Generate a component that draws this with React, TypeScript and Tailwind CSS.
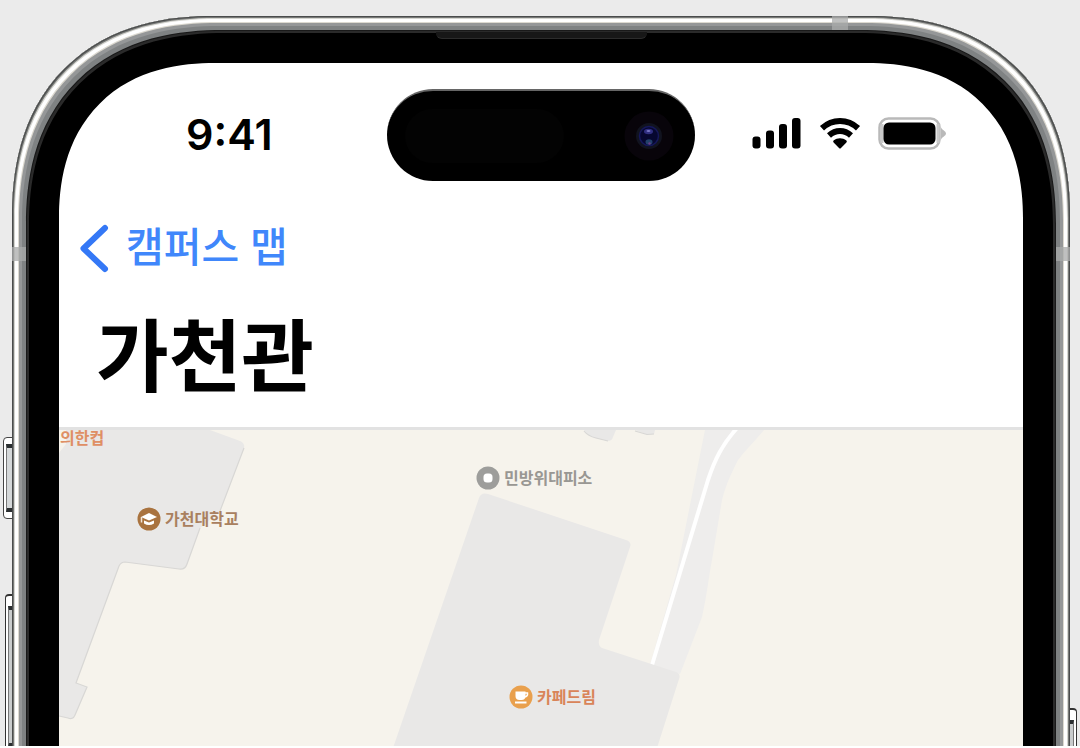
import React from "react";

function SignalIcon() {
  return (
    <svg className="h-9 w-[50px]" viewBox="0 0 50 36" aria-label="신호" role="img">
      <rect x="0.5" y="19.5" width="8" height="12" rx="3" />
      <rect x="14" y="13.5" width="8" height="18" rx="3" />
      <rect x="27" y="7" width="8" height="24.5" rx="3" />
      <rect x="40" y="1" width="8.5" height="30.5" rx="3" />
    </svg>
  );
}

function WifiIcon() {
  return (
    <svg className="h-9 w-[42px]" viewBox="0 0 42 36" aria-label="와이파이" role="img">
      <path d="M3 11.2C13.4 1.6 28.6 1.6 39 11.2" fill="none" stroke="#000" strokeWidth="6" />
      <path d="M10 18.4C16.5 12.6 25.5 12.6 32 18.4" fill="none" stroke="#000" strokeWidth="6" />
      <path d="M14.6 23.6C18.4 20.6 23.6 20.6 27.4 23.6C28 24.2 28 24.8 27.4 25.4L22 30.9C21.3 31.6 20.7 31.6 20 30.9L14.6 25.4C14 24.8 14 24.2 14.6 23.6Z" />
    </svg>
  );
}

function BatteryIcon() {
  return (
    <svg className="h-9 w-[70px]" viewBox="0 0 70 36" aria-label="배터리" role="img">
      <rect x="1.5" y="1.5" width="60" height="30" rx="9" fill="#fff" stroke="#b9b9b9" strokeWidth="2.5" />
      <path d="M4 7V26M60 7V26" stroke="#c9c9c9" strokeWidth="3" />
      <path d="M63 10.5C64 13 68 14 68 16.5C68 19 64 20 63 22.5Z" fill="#b9b9b9" />
      <rect x="5.5" y="5.5" width="52" height="22" rx="5.5" />
    </svg>
  );
}

function MapShapes() {
  return (
    <svg
      className="h-full w-full"
      viewBox="59 430 964 316"
      preserveAspectRatio="xMinYMin slice"
      aria-hidden="true"
    >
      <g fill="#e9e8e7">
        <path d="M59 453L66 444V430H210L240 441Q245 443 244 448L220 511L200 528L187 564Q185 570 179 569L125 562Q121 562 119 566L76 683L87 687L75 715Q73 720 68 718L59 716Z" />
        <path d="M584 430Q588 436 596 438L608 441Q612 441 613 437L616 430Z" />
        <path d="M635 430L647 434.5L654 434L655 430Z" />
      </g>
      <g fill="none" stroke="#d8d7d5" strokeWidth="1.2">
        <path d="M244 448L220 511M200 528L187 564Q185 570 179 569L125 562Q121 562 119 566L76 683L87 687L75 715Q73 720 68 718L59 716" />
        <path d="M584 431Q588 436 596 438L608 441M635 431L647 434.5L654 434" />
      </g>
      <path fill="#eeedec" d="M705 430L691 500L676 575L650 665L680 674L702 617C707 595 709 575 712 560L722 500C726 484 732 472 738 460C746 449 756 440 764 430Z" />
      <path d="M737 428C722 445 715 459 708 480L652 665" fill="none" stroke="#fff" strokeWidth="4" />
      <path fill="#e9e8e7" d="M393 748L479 498Q481 492 488 494L626 540Q632 542 630 547L599 640Q598 646 602 648L676 672Q681 674 679 679L657 748Z" />
    </svg>
  );
}

function PinIcon({ kind }: { kind: "shelter" | "school" | "cafe" }) {
  return (
    <svg className="h-6 w-6" viewBox="0 0 24 24" aria-hidden="true">
      {kind === "shelter" && (
        <>
          <circle cx="12" cy="12" r="11.5" fill="#9d9d9b" />
          <rect x="7.5" y="7.5" width="9" height="9" rx="3.5" fill="#fff" />
        </>
      )}
      {kind === "school" && (
        <>
          <circle cx="12" cy="12" r="11.5" fill="#a9733f" />
          <path d="M4 10L12 6L20 10L12 13.5Z" fill="#fff" />
          <path d="M7 13.5L12 15.5L17 13.5V16.5Q12 19.5 7 16.5Z" fill="#fff" />
          <path d="M4.5 10V15.5" stroke="#f3e6d8" strokeWidth="1.5" />
        </>
      )}
      {kind === "cafe" && (
        <>
          <circle cx="12" cy="12" r="11.5" fill="#e9a04d" />
          <path d="M6.5 6.5H16.5V11Q16.5 15 12.5 15H10.5Q6.5 15 6.5 11Z" fill="#fff" />
          <path d="M16 8H18.5Q19 11.5 15.5 12" fill="none" stroke="#fff" strokeWidth="1.5" />
          <path d="M6 17.5H17.5" stroke="#fff" strokeWidth="2" />
        </>
      )}
    </svg>
  );
}

const labelText = "text-[16px] leading-4 font-bold whitespace-nowrap";

function DynamicIsland() {
  return (
    <div className="flex h-[92px] items-center justify-between rounded-full border-t-2 border-[#666] bg-black pr-[21px] pl-[18px]">
      <div className="h-[54px] w-[159px] rounded-full bg-[#030303]" />
      <svg className="h-[50px] w-[50px]" viewBox="0 0 50 50" aria-hidden="true">
        <circle cx="25" cy="25" r="24.5" fill="#08040a" />
        <circle cx="25" cy="25" r="13" fill="#11131f" />
        <circle cx="25" cy="25" r="9.5" fill="#060730" stroke="#15175a" strokeWidth="1.5" />
        <ellipse cx="24.5" cy="20.5" rx="4.5" ry="2.8" fill="#2f2e80" />
        <ellipse cx="24.5" cy="20" rx="2" ry="1" fill="#7775c4" />
        <ellipse cx="25" cy="31" rx="3.5" ry="2.8" fill="#22406a" />
        <circle cx="25.5" cy="32.5" r="1.2" fill="#6a3c84" />
      </svg>
    </div>
  );
}

export default function App() {
  return (
    <div className="flex min-h-screen flex-col bg-white pb-0.5 font-['Inter','Noto_Sans_CJK_KR',sans-serif] text-black">
      <div className="relative flex flex-1 flex-col overflow-hidden bg-[#ebebeb] pt-4 pr-2.5 pl-3">
        {/* Side buttons */}
        <div className="absolute top-[437px] left-[3px] h-[82px] w-3 rounded-l-sm border border-[#444] bg-white py-1.5 pl-0.5">
          <div className="h-full border-y-4 border-l border-y-[#2b2f31] border-l-[#777] bg-[#d5d8d9]" />
        </div>
        <div className="absolute top-[594px] left-[5px] h-[164px] w-3 rounded-l-sm border border-t-2 border-[#333] bg-white py-2.5 pl-0.5">
          <div className="h-full border-y-4 border-l border-y-[#2b2f31] border-l-[#777] bg-[#c9cccd]" />
        </div>
        <div className="absolute top-[708px] right-[3px] h-[164px] w-3 rounded-r-sm border border-t-2 border-[#333] bg-white py-2.5 pr-0.5">
          <div className="h-full border-y-4 border-r border-y-[#2b2f31] border-r-[#777] bg-[#c9cccd]" />
        </div>

        {/* Device body: metal rings are drawn from the outside in */}
        <div className="relative -mb-12 flex flex-1 flex-col rounded-t-[180px] bg-black px-[47px] pt-[47px] pb-12 shadow-[inset_0_0_0_1px_#4a4c4c,inset_0_0_0_2px_#777977,inset_0_0_0_3px_#d5d5d0,inset_0_0_0_6px_#ffffff,inset_0_0_0_7px_#dcd9d0,inset_0_0_0_10px_#959798,inset_0_0_0_14px_#7f8283,inset_0_0_0_15px_#191919,inset_0_0_0_17px_#2a2a2a] supports-[corner-shape:superellipse(1.2)]:rounded-t-[202px] supports-[corner-shape:superellipse(1.2)]:[corner-shape:superellipse(1.2)]">
          <div className="absolute inset-x-0 top-4 flex justify-center">
            <div className="h-[7px] w-[211px] rounded-b-md border-b border-[#2c2c2c] bg-[#171717]" />
          </div>
          <div className="absolute top-0 right-[222px] h-3.5 w-4 bg-[#a9abab]/75" />
          <div className="absolute top-[231px] left-0 h-3.5 w-3.5 bg-[#a9abab]/75" />
          <div className="absolute top-[231px] right-0 h-3.5 w-3.5 bg-[#a9abab]/75" />

          {/* Screen */}
          <div className="flex flex-1 flex-col overflow-hidden rounded-t-[140px] bg-white supports-[corner-shape:superellipse(1.2)]:rounded-t-[156px] supports-[corner-shape:superellipse(1.2)]:[corner-shape:superellipse(1.2)]">
            <header className="border-b-[3px] border-[#e2e2e2] pb-6">
              <div className="grid grid-cols-[1fr_308px_1fr] items-center pt-[26px]">
                <time className="pb-0.5 pl-[127px] text-[43px] leading-[50px] font-semibold">9:41</time>
                <DynamicIsland />
                <div className="flex items-center gap-[17px] pl-[57px]">
                  <SignalIcon />
                  <WifiIcon />
                  <BatteryIcon />
                </div>
              </div>
              <nav className="pt-9 pl-5">
                <button type="button" className="flex items-center gap-[17px] text-[#3478f6]">
                  <svg className="h-[60px] w-[30px]" viewBox="0 0 30 60" aria-hidden="true">
                    <path d="M26 11L4.5 31.5L26 52" fill="none" stroke="currentColor" strokeWidth="6" strokeLinecap="round" strokeLinejoin="round" />
                  </svg>
                  <span className="text-[41px] leading-[60px] font-medium text-[#4087fb]">캠퍼스 맵</span>
                </button>
              </nav>
              <h1 className="pt-[34px] pl-[37px] text-[79px] leading-[92px] font-bold">가천관</h1>
            </header>
            <section aria-label="지도" className="relative min-h-[316px] flex-1 overflow-hidden bg-[#f6f3ec]">
              <div className="absolute inset-0">
                <MapShapes />
              </div>
              <span className={`absolute top-0 left-px text-[#df8f64] ${labelText}`}>의한컵</span>
              <div className="absolute top-[77px] left-[78px] flex items-center gap-1 text-[#a9805f]">
                <PinIcon kind="school" />
                <span className={labelText}>가천대학교</span>
              </div>
              <div className="absolute top-9 left-[417px] flex items-center gap-1 text-[#999793]">
                <PinIcon kind="shelter" />
                <span className={labelText}>민방위대피소</span>
              </div>
              <div className="absolute top-[255px] left-[450px] flex items-center gap-1 text-[#d98459]">
                <PinIcon kind="cafe" />
                <span className={labelText}>카페드림</span>
              </div>
            </section>
          </div>
        </div>
      </div>
    </div>
  );
}
